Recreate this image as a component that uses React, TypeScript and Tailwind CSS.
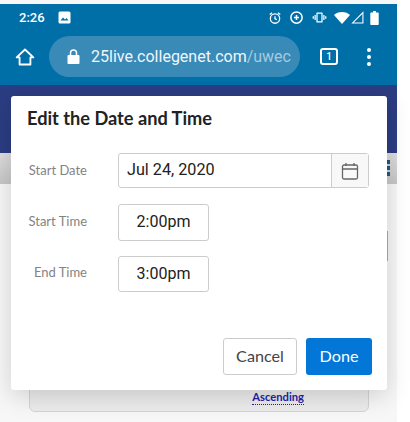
import React from 'react';

const lato = "font-['Lato',sans-serif]";
const roboto = "font-['Roboto',sans-serif]";

const StatusIcons = () => (
    <div className="flex items-center text-white">
        <svg width="14" height="14" viewBox="0 0 24 24" fill="none" stroke="currentColor" strokeWidth="2.2">
            <circle cx="12" cy="13" r="8" />
            <path d="M12 9v4l3 2M3 6l4-3M21 6l-4-3" />
        </svg>
        <svg width="15" height="15" viewBox="0 0 24 24" fill="none" stroke="currentColor" strokeWidth="2.4" className="ml-[7px]">
            <circle cx="12" cy="12" r="9" />
            <path d="M8 12h8M12 8v8" />
        </svg>
        <svg width="15" height="15" viewBox="0 0 24 24" fill="currentColor" className="ml-[8px]">
            <path d="M8 4h8a1 1 0 0 1 1 1v14a1 1 0 0 1-1 1H8a1 1 0 0 1-1-1V5a1 1 0 0 1 1-1zm1 2v12h6V6zM4 8h2v8H4zM18 8h2v8h-2zM1 10h2v4H1zM21 10h2v4h-2z" />
        </svg>
        <svg width="16" height="14" viewBox="0 0 24 20" fill="currentColor" className="ml-[7px]">
            <path d="M12 19L0 5.5C3 3 7 1 12 1s9 2 12 4.5z" />
        </svg>
        <svg width="13" height="13" viewBox="0 0 24 24" fill="none" stroke="currentColor" strokeWidth="2" className="ml-[1px]">
            <path d="M22 3v19H3z" />
        </svg>
        <svg width="9" height="14" viewBox="0 0 12 20" fill="currentColor" className="ml-[6px]">
            <path d="M4 0h4v2h3a1 1 0 0 1 1 1v16a1 1 0 0 1-1 1H1a1 1 0 0 1-1-1V3a1 1 0 0 1 1-1h3z" />
        </svg>
    </div>
);

const BrowserBar = () => (
    <div className="bg-[#006fa8] h-[81px] flex flex-col">
        <div className={`flex items-center justify-between h-[25px] pt-[2px] pl-[19px] pr-[18px] text-white ${roboto}`}>
            <div className="flex items-center gap-[13px]">
                <span className="text-[13px] font-medium leading-none">2:26</span>
                <svg width="13" height="13" viewBox="0 0 13 13">
                    <rect width="12" height="12" x="0.5" y="0.5" rx="1.5" fill="#fff" />
                    <path d="M2.5 9.5l2.5-3 2 2 1.5-1.5 2 2.5z" fill="#006fa8" />
                </svg>
            </div>
            <StatusIcons />
        </div>
        <div className="flex items-center h-[41px] mt-[7px] pl-[15px]">
            <svg width="20" height="20" viewBox="0 0 24 24" fill="none" stroke="#fff" strokeWidth="2.2" strokeLinejoin="round">
                <path d="M12 3L2 12.5h3.5V21h13v-8.5H22z" />
            </svg>
            <div className={`flex items-center ml-[14px] w-[251px] h-[41px] rounded-full bg-[#3a8ab7] pl-[18px] pr-[9px] ${roboto}`}>
                <svg width="13" height="15" viewBox="0 0 13 15" fill="#fff" className="shrink-0">
                    <path d="M1.5 6h10a1 1 0 0 1 1 1v7a1 1 0 0 1-1 1h-10a1 1 0 0 1-1-1V7a1 1 0 0 1 1-1z" />
                    <path d="M3.5 6.5V4a3 3 0 0 1 6 0v2.5" fill="none" stroke="#fff" strokeWidth="1.5" />
                </svg>
                <span className="ml-[11px] text-[16px] whitespace-nowrap overflow-hidden text-[#f0f6fa]">
                    25live.collegenet.com<span className="text-[#a3cbe0]">/uwec</span>
                </span>
            </div>
            <div className={`ml-[20px] w-[18px] h-[17px] rounded-[3px] border-2 border-white flex items-center justify-center text-white text-[10px] font-medium ${roboto}`}>
                1
            </div>
            <div className="ml-[29px] flex flex-col gap-[3px]">
                <span className="w-[4px] h-[4px] rounded-full bg-white" />
                <span className="w-[4px] h-[4px] rounded-full bg-white" />
                <span className="w-[4px] h-[4px] rounded-full bg-white" />
            </div>
        </div>
    </div>
);

const TimeRow = ({ label, value }: { label: string; value: string }) => (
    <div className="flex items-center">
        <span className="w-[71px] -mt-[2px] text-right text-[13px] text-[#838383]">{label}</span>
        <div className={`ml-[31px] w-[91px] h-[36.5px] rounded-[3px] border border-[#ccc] bg-white flex items-center justify-center text-[16px] text-[#222] ${roboto}`}>
            {value}
        </div>
    </div>
);

const Modal = () => (
    <div className="absolute left-[11px] top-[96px] w-[376px] h-[294px] bg-white rounded-[3px] shadow-[0_6px_24px_rgba(0,0,0,0.16)] flex flex-col pl-[5px] pr-[15px]">
        <h2 className="mt-[10px] ml-[11px] text-[18.2px] leading-[24px] font-bold text-[#222]">Edit the Date and Time</h2>
        <div className="flex items-center mt-[23px]">
            <span className="w-[71px] text-right text-[13px] text-[#838383]">Start Date</span>
            <div className="ml-[31px] flex w-[251px] h-[35px] rounded-[3px] border border-[#ccc] bg-white shrink-0">
                <div className={`flex-1 flex items-center pl-[8px] text-[16.2px] text-[#222] ${roboto}`}>Jul 24, 2020</div>
                <div className="w-[37px] flex items-center justify-center border-l border-[#ccc] bg-[#f8f8f8]">
                    <svg width="20" height="20" viewBox="0 0 20 20" fill="none" stroke="#666" strokeWidth="1.3">
                        <rect x="2.5" y="4" width="15" height="14" rx="1.5" />
                        <path d="M2.5 8h15M6 2v3M14 2v3" />
                    </svg>
                </div>
            </div>
        </div>
        <div className="mt-[16px] flex flex-col gap-[15px]">
            <TimeRow label="Start Time" value="2:00pm" />
            <TimeRow label="End Time" value="3:00pm" />
        </div>
        <div className="mt-auto mb-[15px] flex justify-end gap-[9px] text-[16.2px]">
            <button className="w-[74px] h-[37px] rounded-[3px] border border-[#ccc] bg-white text-[#444]">Cancel</button>
            <button className="w-[66px] h-[37px] rounded-[3px] bg-[#0277d8] text-white">Done</button>
        </div>
    </div>
);

const App: React.FC = () => {
    return (
        <div className={`relative w-[410px] h-[422px] bg-white overflow-hidden ${lato}`}>
            <div className="w-[397px] h-[422px] pt-[4px] bg-[#f7f7f7]">
                <BrowserBar />
                <div className="h-[68px] bg-[#2b3d82]" />
                <div className="h-[31px] bg-gradient-to-b from-[#dedede] to-[#c6c6c6] flex justify-end pr-[7px] pt-[7px]">
                    <div className="flex flex-col gap-[2px]">
                        <span className="w-[4px] h-[4px] bg-[#22587f]" />
                        <span className="w-[4px] h-[4px] bg-[#22587f]" />
                        <span className="w-[4px] h-[4px] bg-[#22587f]" />
                    </div>
                </div>
                <div className="ml-[370px] mt-[47px] w-[18px] h-[30px] bg-[#70b8f8]" />
                <div className="ml-[29px] mt-[10px] w-[340px] h-[141px] rounded-[6px] border border-[#d4d4d4] bg-[#ececec] flex items-end justify-end">
                    <a className="mr-[64px] mb-[6px] text-[11.2px] font-bold text-[#2222aa] border-b border-dotted border-[#2222aa] leading-[14px]">Ascending</a>
                </div>
            </div>
            <Modal />
        </div>
    );
};

export default App;
